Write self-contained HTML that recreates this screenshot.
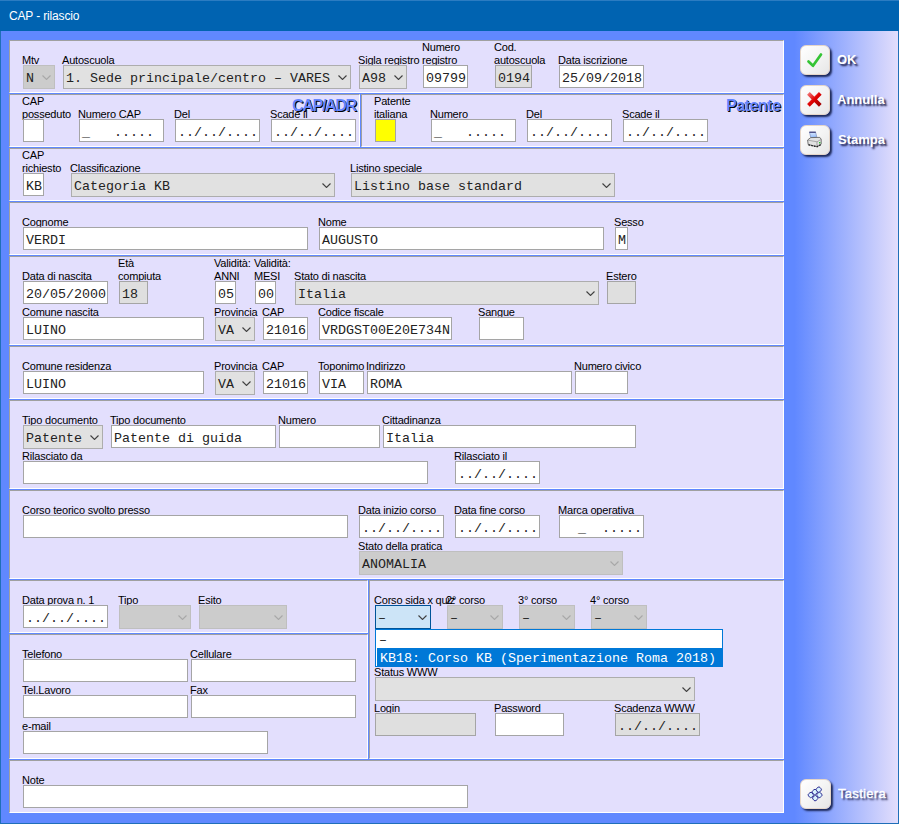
<!DOCTYPE html>
<html><head><meta charset="utf-8"><title>CAP - rilascio</title><style>
*{margin:0;padding:0;box-sizing:border-box}
html,body{width:899px;height:824px;overflow:hidden;background:#6088ff}
#win{position:absolute;left:0;top:0;width:899px;height:824px;background:#6088ff}
.bd{position:absolute;background:#1f6fb8}
#tt{position:absolute;left:0;top:0;width:899px;height:31px;background:#0063b1;border-top:1px solid #2b7cc2}
#tt span{position:absolute;left:9px;top:8px;font:12px/14px "Liberation Sans",sans-serif;color:#fff;letter-spacing:-0.15px}
#grad{position:absolute;left:784px;top:31px;width:114px;height:792px;background:linear-gradient(to right,#6088ff 0%,#6088ff 9%,#e2defc 100%)}
.pn{position:absolute;background:#e3dffd;border-left:1px solid #a0a0a0;border-top:1px solid #a0a0a0;border-right:1px solid #fff;border-bottom:1px solid #fff;box-sizing:content-box}
.lb{position:absolute;font:11px/13px "Liberation Sans",sans-serif;color:#000;white-space:nowrap;letter-spacing:-0.2px}
.tb,.cb{position:absolute;border:1px solid #a5a5a5;background:#fff;box-sizing:content-box;overflow:hidden;white-space:nowrap}
.tb span,.cb span{position:absolute;left:2px;top:50%;margin-top:-6px;font:13.33px/16px "Liberation Mono",monospace;color:#222}
.cb{background:#e1e1e1;border-color:#adadad}
.cb.dis{background:#cccccc;border-color:#bfbfbf}
.cb.foc{background:#cce4f7;border-color:#005499}
.cv{position:absolute;right:3px;top:50%;margin-top:-2px}
.dd{position:absolute;background:#fff;border:1px solid #0078d7;box-sizing:content-box;overflow:hidden}
.it{position:absolute;left:0;width:100%}
.it span{position:absolute;left:3px;top:3px;font:13.33px/16px "Liberation Mono",monospace;color:#222;white-space:nowrap}
.it.sel{background:#0078d7;left:1px}
.it.sel span{color:#fff}
.big{position:absolute;font:bold 15px/16px "Liberation Sans",sans-serif;color:#6485ff;text-shadow:1px 1px 0 #000;white-space:nowrap}
.bt{position:absolute;height:30px;border-radius:6px;border:1px solid #e6d6c8;background:linear-gradient(135deg,#ffffff 0%,#f4f4f4 50%,#e6e6e6 100%);box-shadow:2px 2px 2px rgba(10,20,60,0.85)}
.bt svg{position:absolute;left:-1px;top:-1px}
.btl{position:absolute;font:bold 13px/15px "Liberation Sans",sans-serif;color:#fff;text-shadow:2px 2px 2px rgba(10,10,50,0.95);white-space:nowrap}
.btl.tas{font-weight:normal;-webkit-text-stroke:0.35px #fff}
</style></head>
<body><div id="win"><div class="bd" style="left:0;top:0;width:1px;height:824px"></div><div class="bd" style="left:898px;top:0;width:1px;height:824px"></div><div class="bd" style="left:0;top:823px;width:899px;height:1px"></div><div id="tt"><span>CAP - rilascio</span></div><div id="grad"></div>
<div class="pn" style="left:9px;top:40px;width:773px;height:51px"></div>
<div class="pn" style="left:9px;top:94px;width:349px;height:51px"></div>
<div class="pn" style="left:361px;top:94px;width:421px;height:51px"></div>
<div class="pn" style="left:9px;top:148px;width:773px;height:51px"></div>
<div class="pn" style="left:9px;top:202px;width:773px;height:51px"></div>
<div class="pn" style="left:9px;top:256px;width:773px;height:87px"></div>
<div class="pn" style="left:9px;top:346px;width:773px;height:51px"></div>
<div class="pn" style="left:9px;top:400px;width:773px;height:87px"></div>
<div class="pn" style="left:9px;top:490px;width:773px;height:87px"></div>
<div class="pn" style="left:9px;top:580px;width:357px;height:51px"></div>
<div class="pn" style="left:9px;top:634px;width:357px;height:123px"></div>
<div class="pn" style="left:369px;top:580px;width:413px;height:177px"></div>
<div class="pn" style="left:9px;top:760px;width:773px;height:51px"></div>
<div class="lb" style="left:22px;top:54px">Mtv</div>
<div class="cb dis" style="left:23px;top:65px;width:30px;height:22px"><span>N</span><svg class="cv" width="9" height="5" viewBox="0 0 9 5"><path d="M0.5 0.5 L4.5 4.5 L8.5 0.5" fill="none" stroke="#a8a8a8" stroke-width="1.1"/></svg></div>
<div class="lb" style="left:62px;top:54px">Autoscuola</div>
<div class="cb" style="left:63px;top:65px;width:286px;height:22px"><span>1. Sede principale/centro &#8211; VARES</span><svg class="cv" width="9" height="5" viewBox="0 0 9 5"><path d="M0.5 0.5 L4.5 4.5 L8.5 0.5" fill="none" stroke="#404040" stroke-width="1.1"/></svg></div>
<div class="lb" style="left:358px;top:54px">Sigla registro</div>
<div class="cb" style="left:359px;top:65px;width:46px;height:22px"><span>A98</span><svg class="cv" width="9" height="5" viewBox="0 0 9 5"><path d="M0.5 0.5 L4.5 4.5 L8.5 0.5" fill="none" stroke="#404040" stroke-width="1.1"/></svg></div>
<div class="lb" style="left:422px;top:41px">Numero</div>
<div class="lb" style="left:422px;top:54px">registro</div>
<div class="tb" style="left:423px;top:65px;width:43px;height:21px"><span>09799</span></div>
<div class="lb" style="left:494px;top:41px">Cod.</div>
<div class="lb" style="left:494px;top:54px">autoscuola</div>
<div class="tb" style="left:495px;top:65px;width:35px;height:21px;background:#dfdfdf"><span>0194</span></div>
<div class="lb" style="left:558px;top:54px">Data iscrizione</div>
<div class="tb" style="left:559px;top:65px;width:83px;height:21px"><span>25/09/2018</span></div>
<div class="lb" style="left:22px;top:95px">CAP</div>
<div class="lb" style="left:22px;top:108px">posseduto</div>
<div class="tb" style="left:23px;top:119px;width:19px;height:21px"><span></span></div>
<div class="lb" style="left:78px;top:108px">Numero CAP</div>
<div class="tb" style="left:79px;top:119px;width:83px;height:21px"><span>_&nbsp;&nbsp;&nbsp;.....</span></div>
<div class="lb" style="left:174px;top:108px">Del</div>
<div class="tb" style="left:175px;top:119px;width:83px;height:21px"><span>../../....</span></div>
<div class="lb" style="left:270px;top:108px">Scade il</div>
<div class="tb" style="left:271px;top:119px;width:83px;height:21px"><span>../../....</span></div>
<div class="big" style="left:292px;top:97.5px;font-size:16px;letter-spacing:-1.3px">CAP/ADR</div>
<div class="lb" style="left:374px;top:95px">Patente</div>
<div class="lb" style="left:374px;top:108px">italiana</div>
<div class="tb" style="left:375px;top:119px;width:19px;height:21px;background:#ffff00"><span></span></div>
<div class="lb" style="left:430px;top:108px">Numero</div>
<div class="tb" style="left:431px;top:119px;width:83px;height:21px"><span>_&nbsp;&nbsp;&nbsp;.....</span></div>
<div class="lb" style="left:526px;top:108px">Del</div>
<div class="tb" style="left:527px;top:119px;width:83px;height:21px"><span>../../....</span></div>
<div class="lb" style="left:622px;top:108px">Scade il</div>
<div class="tb" style="left:623px;top:119px;width:83px;height:21px"><span>../../....</span></div>
<div class="big" style="left:726px;top:98px;font-size:16px;letter-spacing:-0.5px">Patente</div>
<div class="lb" style="left:22px;top:149px">CAP</div>
<div class="lb" style="left:22px;top:162px">richiesto</div>
<div class="tb" style="left:23px;top:173px;width:19px;height:21px"><span>KB</span></div>
<div class="lb" style="left:70px;top:162px">Classificazione</div>
<div class="cb" style="left:71px;top:173px;width:262px;height:22px"><span>Categoria KB</span><svg class="cv" width="9" height="5" viewBox="0 0 9 5"><path d="M0.5 0.5 L4.5 4.5 L8.5 0.5" fill="none" stroke="#404040" stroke-width="1.1"/></svg></div>
<div class="lb" style="left:350px;top:162px">Listino speciale</div>
<div class="cb" style="left:351px;top:173px;width:262px;height:22px"><span>Listino base standard</span><svg class="cv" width="9" height="5" viewBox="0 0 9 5"><path d="M0.5 0.5 L4.5 4.5 L8.5 0.5" fill="none" stroke="#404040" stroke-width="1.1"/></svg></div>
<div class="lb" style="left:22px;top:216px">Cognome</div>
<div class="tb" style="left:23px;top:227px;width:283px;height:21px"><span>VERDI</span></div>
<div class="lb" style="left:318px;top:216px">Nome</div>
<div class="tb" style="left:319px;top:227px;width:283px;height:21px"><span>AUGUSTO</span></div>
<div class="lb" style="left:614px;top:216px">Sesso</div>
<div class="tb" style="left:615px;top:227px;width:11px;height:21px"><span>M</span></div>
<div class="lb" style="left:22px;top:270px">Data di nascita</div>
<div class="tb" style="left:23px;top:281px;width:83px;height:21px"><span>20/05/2000</span></div>
<div class="lb" style="left:118px;top:257px">Et&agrave;</div>
<div class="lb" style="left:118px;top:270px">compiuta</div>
<div class="tb" style="left:119px;top:281px;width:27px;height:21px;background:#dfdfdf"><span>18</span></div>
<div class="lb" style="left:214px;top:257px">Validit&agrave;:</div>
<div class="lb" style="left:214px;top:270px">ANNI</div>
<div class="tb" style="left:215px;top:281px;width:19px;height:21px"><span>05</span></div>
<div class="lb" style="left:254px;top:257px">Validit&agrave;:</div>
<div class="lb" style="left:254px;top:270px">MESI</div>
<div class="tb" style="left:255px;top:281px;width:19px;height:21px"><span>00</span></div>
<div class="lb" style="left:294px;top:270px">Stato di nascita</div>
<div class="cb" style="left:295px;top:281px;width:302px;height:22px"><span>Italia</span><svg class="cv" width="9" height="5" viewBox="0 0 9 5"><path d="M0.5 0.5 L4.5 4.5 L8.5 0.5" fill="none" stroke="#404040" stroke-width="1.1"/></svg></div>
<div class="lb" style="left:606px;top:270px">Estero</div>
<div class="tb" style="left:607px;top:281px;width:27px;height:21px;background:#dfdfdf"><span></span></div>
<div class="lb" style="left:22px;top:306px">Comune nascita</div>
<div class="tb" style="left:23px;top:317px;width:179px;height:21px"><span>LUINO</span></div>
<div class="lb" style="left:214px;top:306px">Provincia</div>
<div class="cb" style="left:215px;top:317px;width:38px;height:22px"><span>VA</span><svg class="cv" width="9" height="5" viewBox="0 0 9 5"><path d="M0.5 0.5 L4.5 4.5 L8.5 0.5" fill="none" stroke="#404040" stroke-width="1.1"/></svg></div>
<div class="lb" style="left:262px;top:306px">CAP</div>
<div class="tb" style="left:263px;top:317px;width:43px;height:21px"><span>21016</span></div>
<div class="lb" style="left:318px;top:306px">Codice fiscale</div>
<div class="tb" style="left:319px;top:317px;width:131px;height:21px"><span>VRDGST00E20E734N</span></div>
<div class="lb" style="left:478px;top:306px">Sangue</div>
<div class="tb" style="left:479px;top:317px;width:43px;height:21px"><span></span></div>
<div class="lb" style="left:22px;top:360px">Comune residenza</div>
<div class="tb" style="left:23px;top:371px;width:179px;height:21px"><span>LUINO</span></div>
<div class="lb" style="left:214px;top:360px">Provincia</div>
<div class="cb" style="left:215px;top:371px;width:38px;height:22px"><span>VA</span><svg class="cv" width="9" height="5" viewBox="0 0 9 5"><path d="M0.5 0.5 L4.5 4.5 L8.5 0.5" fill="none" stroke="#404040" stroke-width="1.1"/></svg></div>
<div class="lb" style="left:262px;top:360px">CAP</div>
<div class="tb" style="left:263px;top:371px;width:43px;height:21px"><span>21016</span></div>
<div class="lb" style="left:318px;top:360px">Toponimo</div>
<div class="tb" style="left:319px;top:371px;width:43px;height:21px"><span>VIA</span></div>
<div class="lb" style="left:366px;top:360px">Indirizzo</div>
<div class="tb" style="left:367px;top:371px;width:203px;height:21px"><span>ROMA</span></div>
<div class="lb" style="left:574px;top:360px">Numero civico</div>
<div class="tb" style="left:575px;top:371px;width:51px;height:21px"><span></span></div>
<div class="lb" style="left:22px;top:414px">Tipo documento</div>
<div class="cb" style="left:23px;top:425px;width:78px;height:22px"><span>Patente</span><svg class="cv" width="9" height="5" viewBox="0 0 9 5"><path d="M0.5 0.5 L4.5 4.5 L8.5 0.5" fill="none" stroke="#404040" stroke-width="1.1"/></svg></div>
<div class="lb" style="left:110px;top:414px">Tipo documento</div>
<div class="tb" style="left:111px;top:425px;width:163px;height:21px"><span>Patente di guida</span></div>
<div class="lb" style="left:278px;top:414px">Numero</div>
<div class="tb" style="left:279px;top:425px;width:99px;height:21px"><span></span></div>
<div class="lb" style="left:382px;top:414px">Cittadinanza</div>
<div class="tb" style="left:383px;top:425px;width:251px;height:21px"><span>Italia</span></div>
<div class="lb" style="left:22px;top:450px">Rilasciato da</div>
<div class="tb" style="left:23px;top:461px;width:403px;height:21px"><span></span></div>
<div class="lb" style="left:454px;top:450px">Rilasciato il</div>
<div class="tb" style="left:455px;top:461px;width:83px;height:21px"><span>../../....</span></div>
<div class="lb" style="left:22px;top:504px">Corso teorico svolto presso</div>
<div class="tb" style="left:23px;top:515px;width:323px;height:21px"><span></span></div>
<div class="lb" style="left:358px;top:504px">Data inizio corso</div>
<div class="tb" style="left:359px;top:515px;width:83px;height:21px"><span>../../....</span></div>
<div class="lb" style="left:454px;top:504px">Data fine corso</div>
<div class="tb" style="left:455px;top:515px;width:83px;height:21px"><span>../../....</span></div>
<div class="lb" style="left:558px;top:504px">Marca operativa</div>
<div class="tb" style="left:559px;top:515px;width:83px;height:21px"><span>&nbsp;&nbsp;_&nbsp;&nbsp;.....</span></div>
<div class="lb" style="left:358px;top:540px">Stato della pratica</div>
<div class="cb dis" style="left:359px;top:551px;width:262px;height:22px"><span>ANOMALIA</span><svg class="cv" width="9" height="5" viewBox="0 0 9 5"><path d="M0.5 0.5 L4.5 4.5 L8.5 0.5" fill="none" stroke="#a8a8a8" stroke-width="1.1"/></svg></div>
<div class="lb" style="left:22px;top:594px">Data prova n. 1</div>
<div class="tb" style="left:23px;top:605px;width:83px;height:21px"><span>../../....</span></div>
<div class="lb" style="left:118px;top:594px">Tipo</div>
<div class="cb dis" style="left:119px;top:605px;width:70px;height:22px"><span></span><svg class="cv" width="9" height="5" viewBox="0 0 9 5"><path d="M0.5 0.5 L4.5 4.5 L8.5 0.5" fill="none" stroke="#a8a8a8" stroke-width="1.1"/></svg></div>
<div class="lb" style="left:198px;top:594px">Esito</div>
<div class="cb dis" style="left:199px;top:605px;width:86px;height:22px"><span></span><svg class="cv" width="9" height="5" viewBox="0 0 9 5"><path d="M0.5 0.5 L4.5 4.5 L8.5 0.5" fill="none" stroke="#a8a8a8" stroke-width="1.1"/></svg></div>
<div class="lb" style="left:22px;top:648px">Telefono</div>
<div class="tb" style="left:23px;top:659px;width:163px;height:21px"><span></span></div>
<div class="lb" style="left:190px;top:648px">Cellulare</div>
<div class="tb" style="left:191px;top:659px;width:163px;height:21px"><span></span></div>
<div class="lb" style="left:22px;top:684px">Tel.Lavoro</div>
<div class="tb" style="left:23px;top:695px;width:163px;height:21px"><span></span></div>
<div class="lb" style="left:190px;top:684px">Fax</div>
<div class="tb" style="left:191px;top:695px;width:163px;height:21px"><span></span></div>
<div class="lb" style="left:22px;top:720px">e-mail</div>
<div class="tb" style="left:23px;top:731px;width:243px;height:21px"><span></span></div>
<div class="lb" style="left:374px;top:594px">Corso sida x quiz</div>
<div class="cb foc" style="left:375px;top:605px;width:54px;height:22px"><span>&#8211;</span><svg class="cv" width="9" height="5" viewBox="0 0 9 5"><path d="M0.5 0.5 L4.5 4.5 L8.5 0.5" fill="none" stroke="#404040" stroke-width="1.1"/></svg></div>
<div class="lb" style="left:446px;top:594px">2&deg; corso</div>
<div class="cb dis" style="left:447px;top:605px;width:54px;height:22px"><span>&#8211;</span><svg class="cv" width="9" height="5" viewBox="0 0 9 5"><path d="M0.5 0.5 L4.5 4.5 L8.5 0.5" fill="none" stroke="#a8a8a8" stroke-width="1.1"/></svg></div>
<div class="lb" style="left:518px;top:594px">3&deg; corso</div>
<div class="cb dis" style="left:519px;top:605px;width:54px;height:22px"><span>&#8211;</span><svg class="cv" width="9" height="5" viewBox="0 0 9 5"><path d="M0.5 0.5 L4.5 4.5 L8.5 0.5" fill="none" stroke="#a8a8a8" stroke-width="1.1"/></svg></div>
<div class="lb" style="left:590px;top:594px">4&deg; corso</div>
<div class="cb dis" style="left:591px;top:605px;width:54px;height:22px"><span>&#8211;</span><svg class="cv" width="9" height="5" viewBox="0 0 9 5"><path d="M0.5 0.5 L4.5 4.5 L8.5 0.5" fill="none" stroke="#a8a8a8" stroke-width="1.1"/></svg></div>
<div class="lb" style="left:374px;top:666px">Status WWW</div>
<div class="cb" style="left:375px;top:677px;width:318px;height:22px"><span></span><svg class="cv" width="9" height="5" viewBox="0 0 9 5"><path d="M0.5 0.5 L4.5 4.5 L8.5 0.5" fill="none" stroke="#404040" stroke-width="1.1"/></svg></div>
<div class="lb" style="left:374px;top:702px">Login</div>
<div class="tb" style="left:375px;top:713px;width:99px;height:21px;background:#dfdfdf"><span></span></div>
<div class="lb" style="left:494px;top:702px">Password</div>
<div class="tb" style="left:495px;top:713px;width:67px;height:21px"><span></span></div>
<div class="lb" style="left:614px;top:702px">Scadenza WWW</div>
<div class="tb" style="left:615px;top:713px;width:83px;height:21px;background:#dfdfdf"><span>../../....</span></div>
<div class="dd" style="left:375px;top:629px;width:346px;height:36px"><div class="it" style="top:0;height:18px"><span>&#8211;</span></div><div class="it sel" style="top:18px;height:18px"><span>KB18: Corso KB (Sperimentazione Roma 2018)</span></div></div>
<div class="lb" style="left:22px;top:774px">Note</div>
<div class="tb" style="left:23px;top:785px;width:443px;height:21px"><span></span></div>
<div class="bt" style="left:800px;top:45px;width:30px"><svg width="30" height="30"><path d="M8.5 16.5 L13 20.8 L21 9.5" fill="none" stroke="#34c434" stroke-width="2.7" stroke-linecap="round" stroke-linejoin="round"/></svg></div>
<div class="btl" style="left:837px;top:52px;letter-spacing:0px">OK</div>
<div class="bt" style="left:800px;top:85px;width:30px"><svg width="30" height="30"><defs><linearGradient id="xg" x1="0" y1="0" x2="1" y2="1"><stop offset="0" stop-color="#f07070"/><stop offset="0.5" stop-color="#e00000"/><stop offset="1" stop-color="#a00000"/></linearGradient></defs><path d="M8.4 8.4 L20.3 20.3 M20.3 8.4 L8.4 20.3" fill="none" stroke="url(#xg)" stroke-width="3.8" stroke-linecap="butt"/></svg></div>
<div class="btl" style="left:837px;top:92px;letter-spacing:0px">Annulla</div>
<div class="bt" style="left:800px;top:125px;width:30px"><svg width="30" height="30"><defs><linearGradient id="pg" x1="0" y1="0" x2="0" y2="1"><stop offset="0" stop-color="#d8e8ff"/><stop offset="1" stop-color="#90b8f8"/></linearGradient></defs><path d="M9.5 7.3 L15.6 7.3 L16.8 12 L10.8 12.8 Z" fill="url(#pg)" stroke="#8090c0" stroke-width="0.7"/><line x1="9.3" y1="7.2" x2="15.8" y2="7.2" stroke="#303070" stroke-width="1.1"/><path d="M7.6 15 L10.8 12.6 L19.8 12.4 L21.2 14.2 L21.2 19.2 L17 21.6 L8.2 19.6 Z" fill="#e2e2e2" stroke="#555" stroke-width="0.8"/><path d="M8 15.2 L17 16.8 L21 14.4" fill="none" stroke="#9a9a9a" stroke-width="0.8"/><path d="M17 16.8 L17 21.4" stroke="#888" stroke-width="0.7"/><rect x="19" y="17" width="1.4" height="1.4" fill="#30c030"/><path d="M8.5 19.8 L17 21.8 L21 19.6" fill="none" stroke="#202020" stroke-width="1.3" stroke-dasharray="1.6 1.2"/></svg></div>
<div class="btl" style="left:838px;top:132px;letter-spacing:0px">Stampa</div>
<div class="bt" style="left:800px;top:779px;width:31px"><svg width="30" height="30"><g fill="#d8f2ff" stroke="#2a2a90" stroke-width="0.9"><rect x="8.5" y="13.7" width="4.6" height="4.6" rx="1.5" transform="rotate(-40 10.8 16)"/><rect x="12.5" y="10.7" width="4.6" height="4.6" rx="1.5" transform="rotate(-40 14.8 13)"/><rect x="16.5" y="8.3" width="4.6" height="4.6" rx="1.5" transform="rotate(-40 18.8 10.6)"/><rect x="12.899999999999999" y="16.9" width="4.6" height="4.6" rx="1.5" transform="rotate(-40 15.2 19.2)"/><rect x="17.099999999999998" y="13.7" width="4.6" height="4.6" rx="1.5" transform="rotate(-40 19.4 16)"/></g></svg></div>
<div class="btl tas" style="left:838px;top:786px;letter-spacing:0.3px">Tastiera</div>
</div></body></html>
